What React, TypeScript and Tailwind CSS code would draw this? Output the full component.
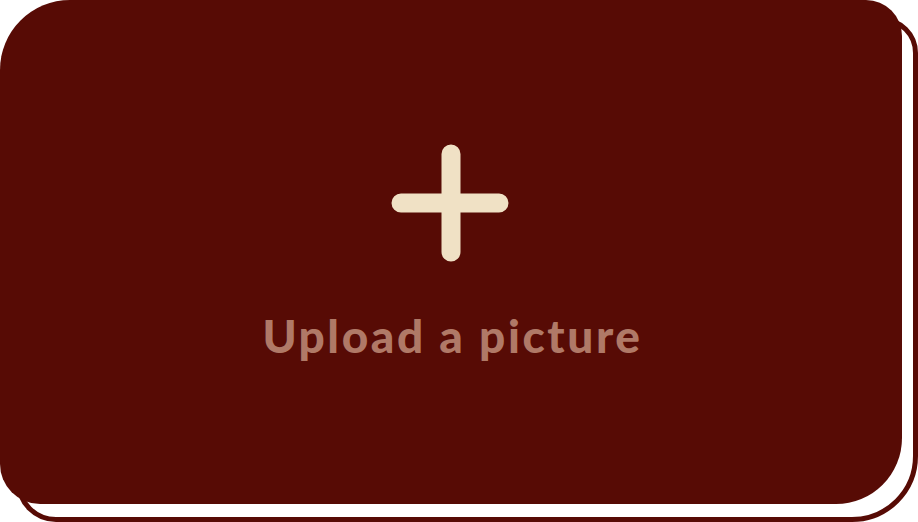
import React from "react";

const PlusIcon = () => (
  <svg width="120" height="120" viewBox="0 0 120 120" fill="none">
    <path
      d="M60 10 V108 M10 59 H108"
      stroke="#f0e1c5"
      strokeWidth="19"
      strokeLinecap="round"
    />
  </svg>
);

const App = () => {
  return (
    <div className="w-[918px] h-[522px] bg-white overflow-hidden">
      <div className="relative w-[902px] h-[504px]">
        {/* offset back card */}
        <div className="absolute left-[16px] top-[17px] w-[902px] h-[505px] bg-white border-[5px] border-[#570b05] rounded-[70px_36px_66px_40px]" />

        {/* front card */}
        <div className="relative w-full h-full bg-[#570b05] rounded-[70px_36px_66px_40px] flex flex-col items-center pt-[144px]">
          <PlusIcon />
          <p
            className="mt-[49px] pl-[3px] text-[46px] font-black tracking-[2.6px] text-[#b07967] leading-none"
            style={{ fontFamily: "Lato, 'Open Sans', sans-serif" }}
          >
            Upload a picture
          </p>
        </div>
      </div>
    </div>
  );
};

export default App;
